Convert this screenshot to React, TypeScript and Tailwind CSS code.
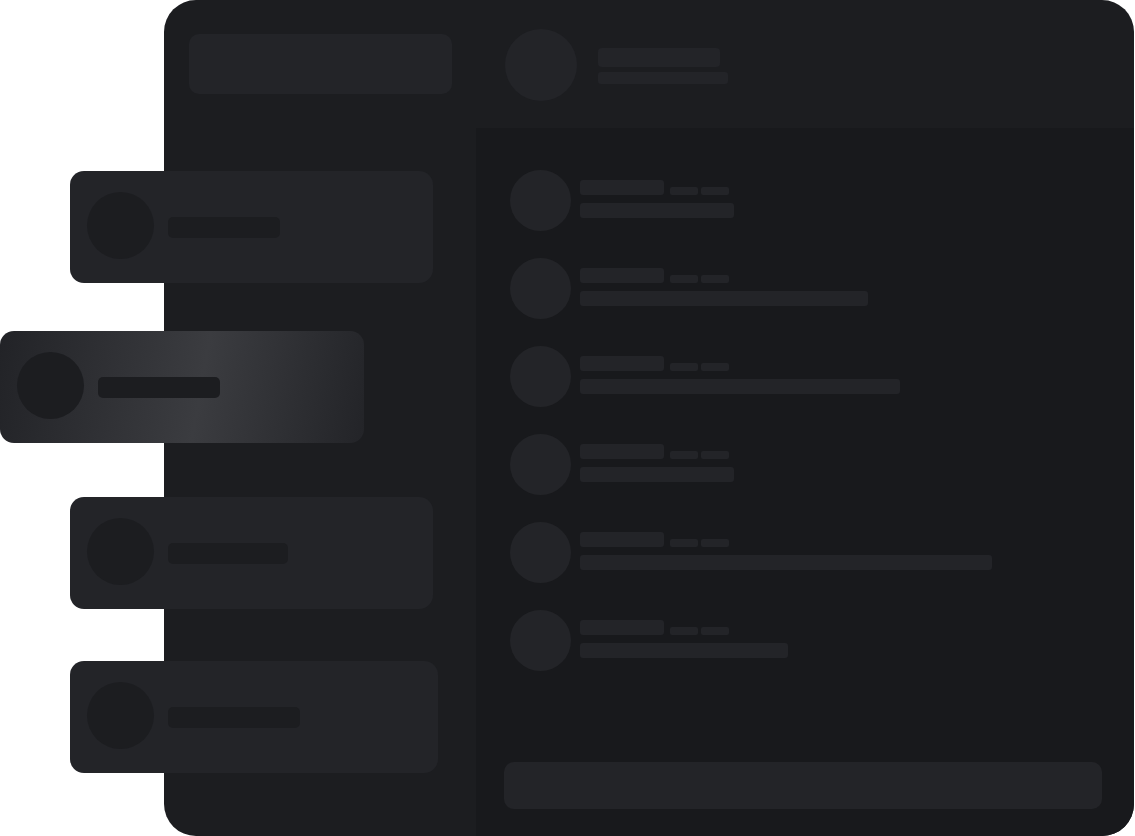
const messages = [154, 288, 320, 154, 412, 208];

const cards = [
  { mt: "mt-[77px]", ml: "-ml-[119px]", w: "w-[363px]", bar: "w-[112px]", active: false },
  { mt: "mt-[48px]", ml: "-ml-[189px]", w: "w-[364px]", bar: "w-[122px]", active: true },
  { mt: "mt-[54px]", ml: "-ml-[119px]", w: "w-[363px]", bar: "w-[120px]", active: false },
  { mt: "mt-[52px]", ml: "-ml-[119px]", w: "w-[368px]", bar: "w-[132px]", active: false },
];

function App() {
  return (
    <div className="w-[1135px] h-[836px] bg-white">
      <div className="ml-[164px] w-[970px] h-[836px] rounded-[32px] bg-[#1c1d20] flex">
        {/* 사이드바 */}
        <div className="w-[312px] shrink-0 pl-[25px] pt-[34px] flex flex-col">
          <div className="w-[263px] h-[60px] rounded-[10px] bg-[#232428]"></div>
          {cards.map((card, index) => (
            <div
              key={index}
              className={`${card.mt} ${card.ml} ${card.w} h-[112px] rounded-[14px] flex items-center pl-[17px] gap-[14px] ${
                card.active
                  ? "bg-[linear-gradient(100deg,#222327_0%,#3b3c40_55%,#232428_100%)]"
                  : "bg-[#232428]"
              }`}
            >
              <div className="w-[67px] h-[67px] -mt-[4px] rounded-full bg-[#1c1d20]"></div>
              <div className={`${card.bar} h-[21px] rounded-[5px] bg-[#1c1d20]`}></div>
            </div>
          ))}
        </div>

        {/* 채팅 영역 */}
        <div className="flex-1 flex flex-col">
          <div className="h-[128px] shrink-0 flex items-start pt-[29px] pl-[29px] gap-[21px]">
            <div className="w-[72px] h-[72px] rounded-full bg-[#232428]"></div>
            <div className="pt-[19px] flex flex-col gap-[5px]">
              <div className="w-[122px] h-[19px] rounded-[4px] bg-[#232428]"></div>
              <div className="w-[130px] h-[12px] rounded-[3px] bg-[#232428]"></div>
            </div>
          </div>
          <div className="flex-1 bg-[#18191c] rounded-br-[32px] flex flex-col pt-[42px] pl-[34px] pr-[32px] pb-[27px]">
            <div className="flex flex-col gap-[27px]">
              {messages.map((width, index) => (
                <div key={index} className="flex gap-[9px]">
                  <div className="w-[61px] h-[61px] rounded-full bg-[#232428] shrink-0"></div>
                  <div className="pt-[10px] flex flex-col gap-[8px]">
                    <div className="flex items-end">
                      <div className="w-[84px] h-[15px] rounded-[3px] bg-[#232428]"></div>
                      <div className="ml-[6px] w-[28px] h-[8px] rounded-[2px] bg-[#232428]"></div>
                      <div className="ml-[3px] w-[28px] h-[8px] rounded-[2px] bg-[#232428]"></div>
                    </div>
                    <div
                      className="h-[15px] rounded-[3px] bg-[#232428]"
                      style={{ width: width }}
                    ></div>
                  </div>
                </div>
              ))}
            </div>
            <div className="mt-auto -ml-[6px] h-[47px] rounded-[10px] bg-[#232428]"></div>
          </div>
        </div>
      </div>
    </div>
  );
}

export default App;
